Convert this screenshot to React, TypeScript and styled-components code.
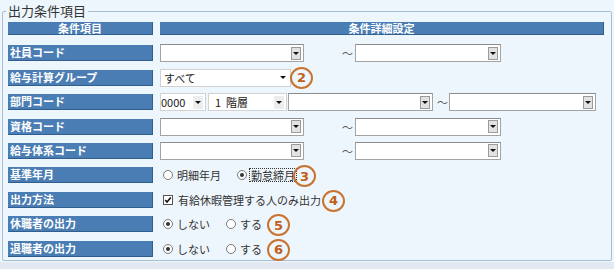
import React from 'react';
import styled, {createGlobalStyle} from 'styled-components';

const GlobalStyle = createGlobalStyle`
  html, body {
    margin: 0;
    padding: 0;
  }
  body {
    background: #e3e9f0;
    font-family: "Noto Sans CJK JP", "Noto Sans", sans-serif;
    color: #333;
  }
`;

const Page = styled.div`
  width: 614px;
  height: 262px;
  background: #eef6fd;
  padding-top: 2px;
  box-sizing: border-box;
`;

const Fieldset = styled.fieldset`
  margin: 0 2px 0 2px;
  padding: 2px 7px 0 5px;
  height: 259px;
  box-sizing: border-box;
  border: 1px solid #a9bdd2;
  border-radius: 2px;
`;

const Legend = styled.legend`
  margin-left: -2px;
  padding: 0 2px;
  font-size: 13px;
  line-height: 18px;
  color: #333;
`;

const Table = styled.div`
  display: grid;
  grid-template-columns: 145px 1fr;
  grid-template-rows: 15px;
  grid-auto-rows: 16px;
  column-gap: 7px;
  row-gap: 8.4px;
`;

const HeadCell = styled.div`
  height: 13px;
  margin-bottom: 2px;
  background: #4a7db4;
  border-right: 1px solid #2f5e8f;
  border-bottom: 1px solid #2f5e8f;
  box-sizing: border-box;
  color: #fff;
  font-size: 11px;
  font-weight: bold;
  line-height: 12px;
  text-align: center;
`;

const Label = styled.div`
  background: #4a7db4;
  border-right: 1px solid #2f5e8f;
  border-bottom: 1px solid #2f5e8f;
  box-sizing: border-box;
  color: #fff;
  font-size: 11px;
  font-weight: bold;
  line-height: 15px;
  padding-left: 2px;
  white-space: nowrap;
`;

const Value = styled.div`
  display: flex;
  align-items: center;
  height: 16px;
  font-size: 11px;
  white-space: nowrap;
`;

type SelectKind = 'boxed' | 'flat' | 'plain';

const SelectBox = styled.div<{$w: number; $kind: SelectKind; $ml?: number}>`
  flex: none;
  width: ${p => p.$w}px;
  height: 18px;
  margin-left: ${p => p.$ml ?? 0}px;
  box-sizing: border-box;
  display: flex;
  align-items: center;
  background: #fff;
  border: 1px solid ${p => (p.$kind === 'boxed' ? '#a3a3a3' : '#d2d2d2')};
  border-top-color: ${p => (p.$kind === 'boxed' ? '#8c8c8c' : '#d2d2d2')};
  font-size: 11px;
  color: #222;
`;

const SelectText = styled.span<{$pad: number}>`
  flex: 1;
  padding-left: ${p => p.$pad}px;
  line-height: 16px;
  overflow: hidden;
  white-space: pre;
`;

const ArrowBtn = styled.span<{$kind: SelectKind}>`
  flex: none;
  width: 10px;
  height: ${p => (p.$kind === 'plain' ? 14 : 13)}px;
  margin-right: 2px;
  box-sizing: border-box;
  display: flex;
  align-items: center;
  justify-content: center;
  background: ${p =>
    p.$kind === 'plain' ? 'transparent' : p.$kind === 'flat' ? '#ededed' : '#e2e2e2'};
  border: ${p => (p.$kind === 'boxed' ? '1px solid #9a9a9a' : 'none')};
  &::after {
    content: '';
    border-left: 3px solid transparent;
    border-right: 3px solid transparent;
    border-top: 3px solid #111;
  }
`;

const Select = ({
  w,
  kind = 'boxed',
  text = '',
  pad = 3,
  ml,
}: {
  w: number;
  kind?: SelectKind;
  text?: string;
  pad?: number;
  ml?: number;
}) => (
  <SelectBox $w={w} $kind={kind} $ml={ml}>
    <SelectText $pad={pad}>{text}</SelectText>
    <ArrowBtn $kind={kind} />
  </SelectBox>
);

const Tilde = styled.span<{$ml: number}>`
  flex: none;
  margin-left: ${p => p.$ml}px;
  width: 11px;
  color: #555;
  font-size: 11px;
  line-height: 16px;
`;

const Option = styled.span<{$ml?: number}>`
  display: inline-flex;
  align-items: center;
  margin-left: ${p => p.$ml ?? 0}px;
  gap: 3px;
`;

const OptText = styled.span<{$focus?: boolean}>`
  line-height: 12px;
  padding: 0 1px;
  outline: ${p => (p.$focus ? '1px dotted #333' : 'none')};
  color: #333;
`;

const Radio = styled.span<{$on?: boolean}>`
  flex: none;
  width: 10px;
  height: 10px;
  box-sizing: border-box;
  border-radius: 50%;
  border: 1px solid #7a7a7a;
  background: #fff;
  display: flex;
  align-items: center;
  justify-content: center;
  &::after {
    content: '';
    display: ${p => (p.$on ? 'block' : 'none')};
    width: 4px;
    height: 4px;
    border-radius: 50%;
    background: #333;
  }
`;

const Badge = styled.span<{$ml: number; $dy?: number}>`
  flex: none;
  width: 23px;
  height: 22px;
  margin-left: ${p => p.$ml}px;
  margin-top: ${p => (p.$dy ?? 0) * 2}px;
  box-sizing: border-box;
  border: 2px solid #c8732f;
  border-radius: 50%;
  display: flex;
  align-items: center;
  justify-content: center;
  color: #c0601a;
  font-family: "DejaVu Sans", "Liberation Sans", sans-serif;
  font-size: 13px;
  font-weight: bold;
  line-height: 1;
`;

const Check = () => (
  <svg width="10" height="10" viewBox="0 0 10 10">
    <rect x="0.5" y="0.5" width="9" height="9" fill="#fff" stroke="#555" />
    <path d="M2.2 5 L4 7 L7.8 2.6" fill="none" stroke="#111" strokeWidth="1.6" />
  </svg>
);

const CheckWrap = styled.span`
  display: inline-flex;
  align-items: center;
  gap: 4px;
  margin-left: 3px;
`;

const Range = () => (
  <Value>
    <Select w={144} />
    <Tilde $ml={38}>～</Tilde>
    <Select w={146} ml={2} />
  </Value>
);

export default function App() {
  return (
    <Page>
      <GlobalStyle />
      <Fieldset>
        <Legend>出力条件項目</Legend>
        <Table>
          <HeadCell>条件項目</HeadCell>
          <HeadCell>条件詳細設定</HeadCell>

          <Label>社員コード</Label>
          <Range />

          <Label>給与計算グループ</Label>
          <Value>
            <Select w={131} kind="plain" text="すべて" />
            <Badge $ml={-1}>2</Badge>
          </Value>

          <Label>部門コード</Label>
          <Value>
            <Select w={46} kind="flat" text="0000" pad={0} />
            <Select w={79} kind="flat" text="1  階層" pad={6} ml={2} />
            <Select w={145} ml={1} />
            <Tilde $ml={4}>～</Tilde>
            <Select w={147} ml={1} />
          </Value>

          <Label>資格コード</Label>
          <Range />

          <Label>給与体系コード</Label>
          <Range />

          <Label>基準年月</Label>
          <Value>
            <Option $ml={3}>
              <Radio />
              <OptText>明細年月</OptText>
            </Option>
            <Option $ml={15}>
              <Radio $on />
              <OptText $focus>勤怠締月</OptText>
            </Option>
            <Badge $ml={-3} $dy={1}>3</Badge>
          </Value>

          <Label>出力方法</Label>
          <Value>
            <CheckWrap>
              <Check />
              <OptText>有給休暇管理する人のみ出力</OptText>
            </CheckWrap>
            <Badge $ml={0} $dy={1}>4</Badge>
          </Value>

          <Label>休職者の出力</Label>
          <Value>
            <Option $ml={3}>
              <Radio $on />
              <OptText>しない</OptText>
            </Option>
            <Option $ml={15}>
              <Radio />
              <OptText>する</OptText>
            </Option>
            <Badge $ml={4} $dy={1}>5</Badge>
          </Value>

          <Label>退職者の出力</Label>
          <Value>
            <Option $ml={3}>
              <Radio $on />
              <OptText>しない</OptText>
            </Option>
            <Option $ml={15}>
              <Radio />
              <OptText>する</OptText>
            </Option>
            <Badge $ml={4} $dy={1}>6</Badge>
          </Value>
        </Table>
      </Fieldset>
    </Page>
  );
}
